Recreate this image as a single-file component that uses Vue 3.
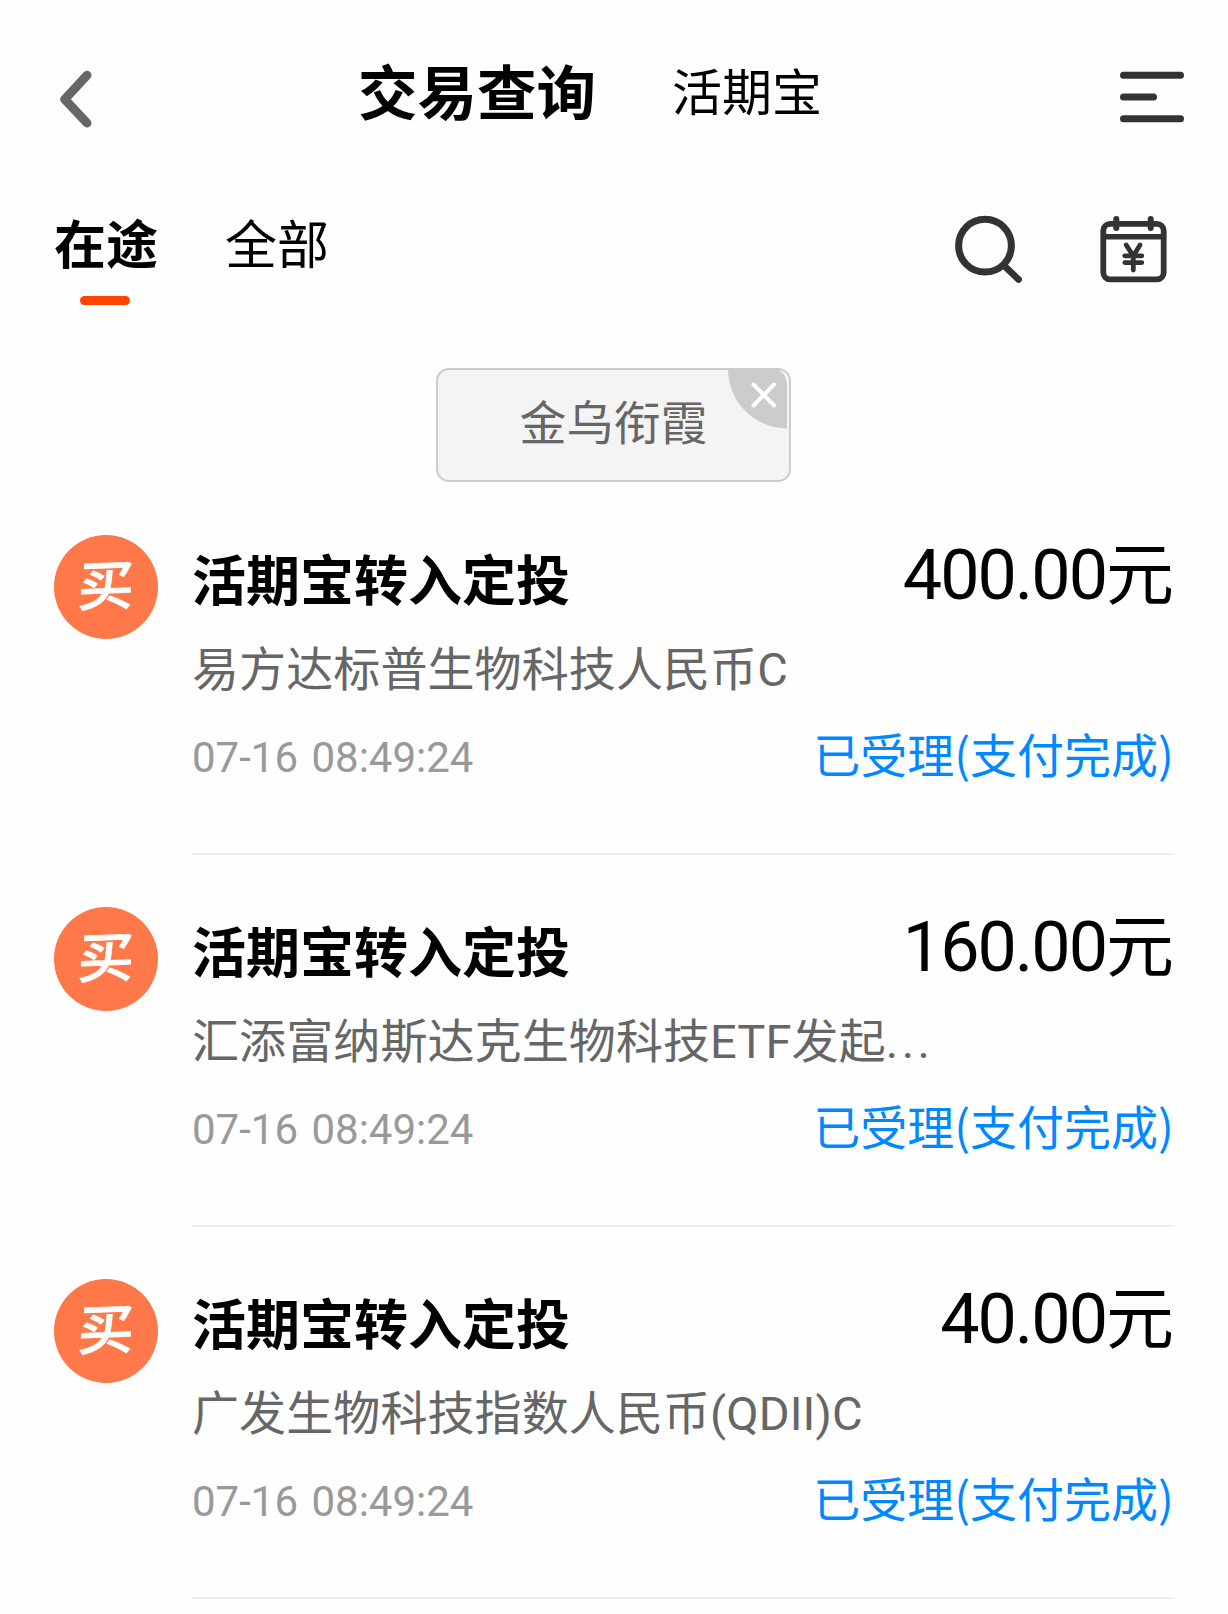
<template>
  <div class="trade-page">
    <header class="nav-bar">
      <svg class="back-icon" width="40" height="64" viewBox="0 0 40 64" fill="none" @click="goBack">
        <path
          d="M31 8.3L8.8 32.3L31 56"
          stroke="#666"
          stroke-width="9"
          stroke-linecap="round"
          stroke-linejoin="round"
        />
      </svg>
      <div class="nav-titles">
        <span
          v-for="(nav, index) in navs"
          :key="nav"
          :class="['nav-title', { active: index === activeNav }]"
          @click="activeNav = index"
        >{{ nav }}</span>
      </div>
      <svg class="menu-icon" width="72" height="64" viewBox="0 0 72 64" fill="none">
        <path d="M7.5 8.3H64.5M7.5 30H37.5M7.5 51.7H64.5" stroke="#333" stroke-width="7" stroke-linecap="round" />
      </svg>
    </header>

    <div class="tab-bar">
      <div class="tabs">
        <div
          v-for="(tab, index) in tabs"
          :key="tab"
          :class="['tab', { active: index === activeTab }]"
          @click="activeTab = index"
        >
          {{ tab }}
        </div>
      </div>
      <div class="tools">
        <svg width="72" height="72" viewBox="0 0 72 72" fill="none" stroke="#333">
          <circle cx="35" cy="33.7" r="26.4" stroke-width="7" />
          <path d="M55 54.5L68.6 67.5" stroke-width="6.6" stroke-linecap="round" />
        </svg>
        <svg width="72" height="72" viewBox="0 0 72 72" fill="none" stroke="#333">
          <rect x="5.3" y="11.8" width="60.4" height="55.6" rx="7" stroke-width="5.8" />
          <path d="M5 24.7H66" stroke-width="5.6" />
          <path d="M18.3 7V16M52.7 7V16" stroke-width="6" stroke-linecap="round" />
          <path
            d="M28.2 33L35.3 44L42 33M35.3 44V58M26.8 43.8H43.8M26.8 50.6H43.8"
            stroke-width="4.8"
            stroke-linecap="round"
            stroke-linejoin="round"
          />
        </svg>
      </div>
    </div>

    <div class="filter-row">
      <div class="filter-tag">
        {{ keyword }}
        <svg class="tag-close" width="60" height="60" viewBox="0 0 60 60" fill="none">
          <path d="M1 0H48Q58 2 60 14V59.5A59.5 59.5 0 0 1 1 0Z" fill="#ccc" />
          <path d="M26.5 15.5L47 36.5M47 15.5L26.5 36.5" stroke="#fff" stroke-width="4" stroke-linecap="round" />
        </svg>
      </div>
    </div>

    <ul class="trade-list">
      <li v-for="item in trades" :key="item.fund" class="trade-item">
        <div class="badge"><span>买</span></div>
        <div class="trade-body">
          <div class="row row-main">
            <span class="title">{{ item.title }}</span>
            <span class="amount"><span class="num">{{ item.amount }}</span>元</span>
          </div>
          <div class="fund">{{ item.fund }}<span v-if="item.more" class="dots">...</span></div>
          <div class="row row-foot">
            <span class="time">{{ item.time }}</span>
            <span class="status">{{ item.status }}</span>
          </div>
        </div>
      </li>
    </ul>
  </div>
</template>

<script setup>
import { ref } from 'vue'

const navs = ['交易查询', '活期宝']
const tabs = ['在途', '全部']
const activeNav = ref(0)
const activeTab = ref(0)
const keyword = ref('金乌衔霞')

const trades = ref([
  {
    title: '活期宝转入定投',
    amount: '400.00',
    fund: '易方达标普生物科技人民币C',
    time: '07-16 08:49:24',
    status: '已受理(支付完成)',
  },
  {
    title: '活期宝转入定投',
    amount: '160.00',
    fund: '汇添富纳斯达克生物科技ETF发起',
    more: true,
    time: '07-16 08:49:24',
    status: '已受理(支付完成)',
  },
  {
    title: '活期宝转入定投',
    amount: '40.00',
    fund: '广发生物科技指数人民币(QDII)C',
    time: '07-16 08:49:24',
    status: '已受理(支付完成)',
  },
])

const goBack = () => {
  window.history.back()
}
</script>

<style>
body {
  background: #fefefe;
}
</style>

<style scoped>
.trade-page {
  width: 1228px;
  height: 1614px;
  overflow: hidden;
  box-sizing: border-box;
  background: #fefefe;
  color: #000;
  font-family: 'Noto Sans CJK SC', sans-serif;
}

.nav-bar {
  display: flex;
  justify-content: space-between;
  height: 176px;
  padding: 67px 40px 0 56px;
  box-sizing: border-box;
}

.back-icon,
.menu-icon {
  display: block;
  flex: none;
}

.nav-titles {
  display: flex;
  align-items: center;
  gap: 76px;
  height: 43px;
  margin-left: -32px;
}

.nav-title {
  font-size: 50px;
  line-height: 60px;
}

.nav-title.active {
  font-size: 59.5px;
  font-weight: bold;
}

.tab-bar {
  display: flex;
  justify-content: space-between;
  height: 192px;
  padding: 36px 58px 0 54px;
  box-sizing: border-box;
}

.tabs {
  display: flex;
  gap: 67px;
}

.tab {
  font-size: 52px;
  line-height: 59px;
  height: 93px;
}

.tab.active {
  display: flex;
  flex-direction: column;
  justify-content: space-between;
  font-weight: bold;
}

.tab.active::after {
  content: '';
  width: 50px;
  height: 9px;
  margin-left: 26px;
  border-radius: 5px;
  background: #ff4400;
}

.tools {
  display: flex;
  gap: 76px;
}

.filter-row {
  display: flex;
  justify-content: center;
  padding-right: 1px;
}

.filter-tag {
  position: relative;
  width: 355px;
  height: 114px;
  border: 2px solid #ccc;
  border-radius: 13px;
  box-sizing: border-box;
  background: #f4f4f4;
  color: #666;
  font-size: 47px;
  line-height: 100px;
  text-align: center;
}

.tag-close {
  position: absolute;
  top: -1px;
  right: 2px;
}

.trade-list {
  margin: 0;
  padding: 0 54px;
  list-style: none;
}

.trade-item {
  display: flex;
  height: 372px;
}

.trade-item:first-child {
  padding-top: 1px;
}

.badge {
  display: flex;
  align-items: center;
  justify-content: center;
  flex: none;
  width: 104px;
  height: 104px;
  margin: 52px 34px 0 0;
  border-radius: 50%;
  background: #ff784a;
  color: #fff;
}

.badge span {
  height: 96px;
  font-size: 56px;
  font-weight: 500;
  line-height: 86px;
  -webkit-text-stroke: 0.8px #fff;
  transform: skew(-2deg, -2deg) scaleY(0.96);
}

.trade-body {
  flex: 1;
  border-bottom: 2px solid #eee;
}

.row {
  display: flex;
  justify-content: space-between;
  align-items: flex-start;
}

.row-main {
  height: 140px;
  padding-top: 52px;
  box-sizing: border-box;
}

.title {
  font-size: 54px;
  font-weight: bold;
  line-height: 86px;
}

.amount {
  font-size: 68px;
  line-height: 70px;
}

.num {
  font-family: Roboto, sans-serif;
  font-size: 70px;
  line-height: 1;
  letter-spacing: -2px;
}

.fund {
  height: 90px;
  color: #666;
  font-family: Roboto, 'Noto Sans CJK SC', sans-serif;
  font-size: 47px;
  line-height: 94px;
  letter-spacing: 0.1px;
}

.dots {
  letter-spacing: 3.5px;
}

.time {
  color: #999;
  font-family: Roboto, sans-serif;
  font-size: 42px;
  line-height: 89px;
  word-spacing: 3px;
}

.status {
  color: #0088ff;
  font-size: 47px;
  line-height: 79px;
}
</style>
